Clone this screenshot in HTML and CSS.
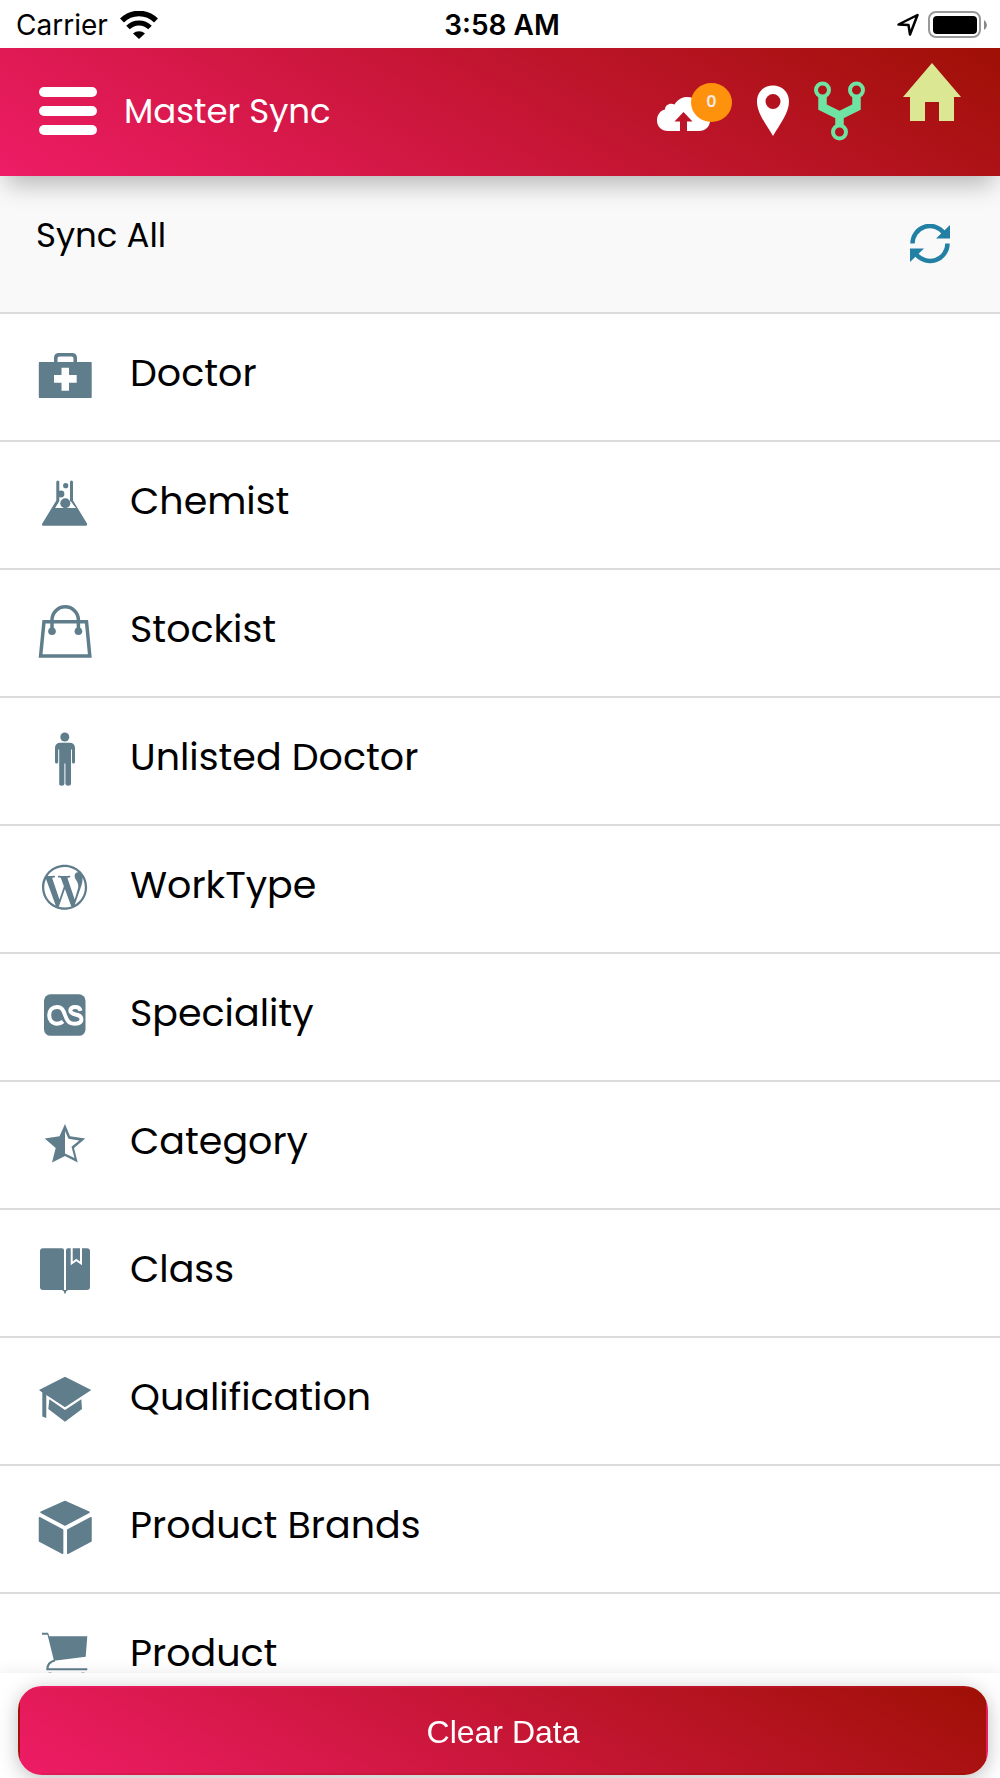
FILE: index.html
```html
<!DOCTYPE html>
<html lang="en">
<head>
<meta charset="utf-8">
<meta name="viewport" content="width=device-width, initial-scale=1">
<title>Master Sync</title>
<link rel="stylesheet" href="styles.css">
</head>
<body>
<div class="status">
  <div class="status-side">
    <span>Carrier</span>
    <svg width="38" height="28" viewBox="0 0 38 28" fill="none" stroke="#000" aria-hidden="true">
      <path d="M2 9.500a24 24 0 0 1 34 0" stroke-width="5.500"/>
      <path d="M8 16.500a15.500 15.500 0 0 1 22 0" stroke-width="5"/>
      <path d="M13 22.500a9 9 0 0 1 12 0L19 28z" fill="#000" stroke="none"/>
    </svg>
  </div>
  <time class="clock">3:58 AM</time>
  <div class="status-side status-end">
    <svg width="24" height="24" viewBox="0 0 24 24" fill="none" stroke="#000" stroke-width="2.500" stroke-linejoin="round" aria-hidden="true"><path d="M2.500 11.500 21.500 2 14 21.500 12.500 12z"/></svg>
    <svg width="60" height="28" viewBox="0 0 60 28" aria-hidden="true">
      <rect x="1" y="1" width="51" height="25" rx="7" fill="#fff" stroke="#999" stroke-width="2"/>
      <rect x="5" y="5" width="44" height="18" rx="4"/>
      <path d="M56 9q3 2 3 5t-3 5z" fill="#888"/>
    </svg>
  </div>
</div>

<header class="bar">
  <button class="plain" type="button" aria-label="Menu">
    <svg width="58" height="50" viewBox="0 0 58 50" fill="#fff" aria-hidden="true"><rect y="1" width="58" height="10" rx="5"/><rect y="20" width="58" height="10" rx="5"/><rect y="39" width="58" height="10" rx="5"/></svg>
  </button>
  <h1 class="title">Master Sync</h1>
  <nav class="actions">
    <button class="plain upload" type="button" aria-label="Pending uploads">
      <svg width="75" height="56" viewBox="0 0 75 56" aria-hidden="true"><path fill="#fff" d="M23 48H11C4.500 48 0 43.500 0 37.500 0 31.500 3.500 27.500 8 26.500 8 22 13 19.500 17.500 21.500 20.500 16.500 25 14 30 14c9 0 14.500 6 14.500 14C50 29 53 33 53 37.500 53 43.500 48.500 48 42 48H30V38.500h5.500L26.500 29 17.500 38.500H23z"/></svg>
      <span class="badge">0</span>
    </button>
    <button class="plain" type="button" aria-label="Location">
      <svg width="32" height="52" viewBox="0 0 32 52" aria-hidden="true"><path fill="#fff" fill-rule="evenodd" d="M16 .5C7 .5 0 7 0 16.500 0 28 9 39 16 51 23 39 32 28 32 16.500 32 7 25 .5 16 .5zM16 9a7.500 7.500 0 1 1 0 15 7.500 7.500 0 0 1 0-15z"/></svg>
    </button>
    <button class="plain" type="button" aria-label="Branches">
      <svg width="51" height="60" viewBox="0 0 51 60" fill="none" stroke="#6fe3a1" aria-hidden="true"><g stroke-width="4"><circle cx="8.500" cy="9" r="6.500"/><circle cx="42.500" cy="9" r="6.500"/><circle cx="25.500" cy="51" r="6.500"/></g><path stroke-width="8.500" d="M8.500 15v11l17 8.500 17-8.500V15M25.500 32v13"/></svg>
    </button>
    <a class="home" href="#" aria-label="Home">
      <svg width="58" height="58" viewBox="0 0 58 58" aria-hidden="true"><path fill="#dbe792" d="M29 0 58 34h-7v24H36V39H22v19H7V34H0z"/></svg>
    </a>
  </nav>
</header>

<section class="sync-all">
  <h2 class="sync-label">Sync All</h2>
  <button class="plain" type="button" aria-label="Sync all">
    <svg width="40" height="40" viewBox="0 0 40 40" aria-hidden="true"><g fill="none" stroke="#2380a5" stroke-width="4.500"><path d="M2.500 19.500A17.500 17.500 0 0 1 34 9"/><path d="M37.500 19.500A17.500 17.500 0 0 1 6 30"/></g><path fill="#2380a5" d="M40 1v13.500H26zM0 38V24.500H14z"/></svg>
  </button>
</section>

<main class="scroll">
<ul class="list">
  <li><button class="item" type="button">
    <svg class="icon" viewBox="0 0 54 54" aria-hidden="true"><path fill-rule="evenodd" d="M1.500 14H16V10q0-5 5-5h13q5 0 5 5v4h14q.7 0 .7.7v34.600q0 .7-.7.7H1.500q-.7 0-.7-.7V14.700q0-.7.7-.7zM19.500 14h16v-3.500q0-2-2-2h-12q-2 0-2 2zM23.500 19.700V27H16v7.700h7.500v8H31v-8h7.700V27H31v-7.300z"/></svg>
    <span>Doctor</span></button></li>
  <li><button class="item" type="button">
    <svg class="icon" viewBox="0 0 54 54" aria-hidden="true"><path d="M18.300 6q0-1.500 1.500-1.500T21.300 6v19.500L17.300 32H38L32 25.500V6q0-1.500 1.500-1.500T35 6v18.500L49 47.500q.7 2.200-1.500 2.200h-42Q3.300 49.700 4.300 47.500L18.300 24.500z"/><path fill="#fff" d="M21.300 25.500 17.300 32H37.500l-4.500-6.500z"/><circle cx="27.700" cy="9.700" r="2.600"/><circle cx="23" cy="18" r="3.400"/><circle cx="27.300" cy="27.300" r="5"/></svg>
    <span>Chemist</span></button></li>
  <li><button class="item" type="button">
    <svg class="icon" viewBox="0 0 54 54" aria-hidden="true"><path fill="none" stroke="#607d8b" stroke-width="3.500" d="M6 17.700h42.500l3.300 34.200H2.600zM14 27V16a13.200 13.200 0 0 1 26.400 0v11"/><circle cx="14" cy="27.300" r="3.800"/><circle cx="40.400" cy="27.300" r="3.800"/></svg>
    <span>Stockist</span></button></li>
  <li><button class="item" type="button">
    <svg class="icon" viewBox="0 0 54 54" aria-hidden="true"><circle cx="26.800" cy="5" r="4.500"/><path d="M22.500 10.700h9q5.500 0 5.500 5.500V30q0 1.500-1.500 1.500T34 30V17.500h-1V52q0 1.700-2.700 1.700T27.400 52V31.500h-1V52q0 1.700-2.700 1.700T21.200 52V17.500h-1V30q0 1.500-1.600 1.500T17 30V16.200q0-5.500 5.500-5.500z"/></svg>
    <span>Unlisted Doctor</span></button></li>
  <li><button class="item" type="button">
    <svg class="icon" viewBox="0 0 54 54" aria-hidden="true"><path fill-rule="evenodd" transform="translate(4 4.700) scale(1.880)" d="M21.469 6.825c.84 1.537 1.318 3.300 1.318 5.175 0 3.979-2.156 7.456-5.363 9.325l3.295-9.527c.615-1.540.820-2.771.820-3.864 0-.405-.026-.780-.070-1.109m-7.981.105c.647-.030 1.232-.105 1.232-.105.582-.075.514-.930-.067-.899 0 0-1.755.135-2.880.135-1.064 0-2.850-.150-2.850-.150-.585-.030-.661.855-.075.885 0 0 .540.061 1.125.090l1.680 4.605-2.370 7.080L5.354 6.900c.649-.030 1.234-.100 1.234-.100.585-.075.516-.930-.065-.896 0 0-1.746.138-2.874.138-.200 0-.438-.008-.690-.015C4.911 3.150 8.235 1.215 12 1.215c2.809 0 5.365 1.072 7.286 2.833-.046-.003-.091-.009-.141-.009-1.060 0-1.812.923-1.812 1.914 0 .890.513 1.643 1.060 2.531.411.720.890 1.643.890 2.977 0 .915-.354 1.994-.821 3.479l-1.075 3.585-3.900-11.610zM12 22.784c-1.059 0-2.081-.153-3.048-.437l3.237-9.406 3.315 9.087c.024.053.050.101.078.149-1.120.393-2.325.609-3.582.609M1.211 12c0-1.564.336-3.050.935-4.390L7.290 21.709C3.694 19.960 1.212 16.271 1.211 12M12 0C5.385 0 0 5.385 0 12s5.385 12 12 12 12-5.385 12-12S18.615 0 12 0"/></svg>
    <span>WorkType</span></button></li>
  <li><button class="item" type="button">
    <svg class="icon" viewBox="0 0 54 54" aria-hidden="true"><rect x="6" y="6.300" width="41.500" height="41.500" rx="6.500"/><path fill="none" stroke="#fff" stroke-width="4" d="M25 33.500C23 35.300 21 35.700 19 35.700 14 35.700 11.200 32 11.200 27.300 11.200 22.200 14.500 19 19 19c5 0 6.500 3.200 8 8 2 6 4 8.700 10 8.700 4 0 6.500-1.700 6.500-4.600C43.500 28 41 27.300 37.500 26.500 34 25.700 32.300 24.800 32.300 22.600 32.300 20.400 34.300 19 37 19c3 0 5 1.200 5.500 3.800"/></svg>
    <span>Speciality</span></button></li>
  <li><button class="item" type="button">
    <svg class="icon" viewBox="0 0 54 54" aria-hidden="true"><path fill-rule="evenodd" d="M27 8 32 20.300 47.300 22.500 36 32l3.700 14.500L27 40 14 46.500 17.700 32 6.700 22.500 21.500 20.300zM27 15v22.500l9.500 4.500-3-11.200 7.800-6.300-10.800-1.700z"/></svg>
    <span>Category</span></button></li>
  <li><button class="item" type="button">
    <svg class="icon" viewBox="0 0 54 54" aria-hidden="true"><path d="M5 4.300h19q2 0 2 2V46H5q-3 0-3-3V7.300q0-3 3-3zM30 4.300h2.700v17l5.600-4 5.700 4v-17h5q3 0 3 3V43q0 3-3 3H28V6.300q0-2 2-2zM34.700 4.300H42v13.200l-3.700-2.700-3.600 2.700zM24 46h6l-2 1.500-.3 2h-1.400l-.3-2z"/></svg>
    <span>Class</span></button></li>
  <li><button class="item" type="button">
    <svg class="icon" viewBox="0 0 54 54" aria-hidden="true"><path d="M27 4.700 53.300 18 27 35.300 8.300 23v23L4.300 44.500V20.500L1 18zM11.300 27.300 27 38l16.300-10.700.7 9.700-17 12.700L10.300 37z"/></svg>
    <span>Qualification</span></button></li>
  <li><button class="item" type="button">
    <svg class="icon" viewBox="0 0 54 54" stroke="#607d8b" stroke-width="1.500" stroke-linejoin="round" aria-hidden="true"><path d="M27 1.500 51 12.300 27 25 3 12.300zM1.500 17.700 24.600 30v23.300L1.500 41zM53 17.700 29.800 30v23.300L53 41z"/></svg>
    <span>Product Brands</span></button></li>
  <li><button class="item" type="button">
    <svg class="icon" viewBox="0 0 54 54" aria-hidden="true"><path d="M4 4.700h6l1.300 3.600h38l-1.600 20.400L16 32.700 9.500 6.700H4z"/><path fill="none" stroke="#607d8b" stroke-width="2" d="M17 32.500Q9.500 34 9.300 41.300H49.300"/><circle cx="12" cy="48" r="3.500"/><circle cx="45" cy="48" r="3.500"/></svg>
    <span>Product</span></button></li>
</ul>
</main>

<footer class="footer">
  <button class="clear" type="button">Clear Data</button>
</footer>
</body>
</html>
```
FILE: styles.css
```css
* { box-sizing: border-box; }

body {
  margin: 0;
  height: 100vh;
  display: flex;
  flex-direction: column;
  overflow: hidden;
  background: #fff;
  color: #000;
  font-family: Poppins, Inter, "Noto Sans", sans-serif;
}

svg { display: block; flex: none; }

button { font: inherit; color: inherit; cursor: pointer; }

.plain {
  display: block;
  padding: 0;
  border: 0;
  background: none;
}

.status {
  flex: none;
  display: flex;
  align-items: center;
  height: 48px;
  padding: 2px 12px 0 16px;
  font: 28px/46px Inter, sans-serif;
}

.status-side {
  flex: 1;
  display: flex;
  align-items: center;
  gap: 12px;
}

.status-end { justify-content: flex-end; gap: 8px; }

.clock { font-weight: 600; }

.bar {
  flex: none;
  position: relative;
  z-index: 1;
  display: flex;
  align-items: center;
  gap: 27px;
  height: 128px;
  padding: 0 39px 2px;
  background: linear-gradient(30deg, #ee1c66, #9f1005);
  box-shadow: 0 14px 24px -6px rgba(0, 0, 0, .28);
  color: #fff;
}

.title {
  flex: 1;
  margin: 0;
  font-size: 34px;
  font-weight: 400;
  line-height: 40px;
}

.actions {
  display: flex;
  align-items: center;
  align-self: stretch;
  gap: 25px;
}

.upload { position: relative; }

.badge {
  position: absolute;
  top: 0;
  right: 0;
  width: 41px;
  height: 39px;
  border-radius: 50%;
  background: #ff920d;
  color: #f3e9e0;
  font-size: 16px;
  font-weight: 600;
  line-height: 37px;
  text-align: center;
}

.home {
  align-self: flex-start;
  margin: 15px 0 0 13px;
}

.sync-all {
  flex: none;
  display: flex;
  align-items: center;
  justify-content: space-between;
  height: 138px;
  padding: 0 50px 0 36px;
  border-bottom: 2px solid #dbdbdb;
  background: #f9f9f9;
}

.sync-label {
  align-self: flex-start;
  margin: 39px 0 0;
  font-size: 34px;
  font-weight: 400;
  line-height: 40px;
}

.scroll {
  flex: 1;
  min-height: 0;
  overflow-y: auto;
  scrollbar-width: none;
}

.list {
  margin: 0;
  padding: 0;
  list-style: none;
}

.item {
  display: flex;
  align-items: flex-start;
  gap: 38px;
  width: 100%;
  height: 128px;
  padding: 34px 38px 0;
  border: 0;
  border-bottom: 2px solid #dbdbdb;
  background: #fff;
  font-size: 38px;
  line-height: 50px;
  text-align: left;
}

.icon {
  width: 54px;
  height: 54px;
  fill: #607d8b;
}

.footer {
  flex: none;
  position: relative;
  padding: 13px 12px 3px 18px;
  background: #fff;
  box-shadow: 0 -2px 14px rgba(0, 0, 0, .07);
}

.clear {
  display: block;
  width: 100%;
  height: 89px;
  padding: 4px 0 0;
  border: 2px solid transparent;
  border-radius: 24px;
  background: linear-gradient(30deg, #ee1c66, #9f1005);
  box-shadow: 0 4px 20px rgba(0, 0, 0, .25);
  color: #fff;
  font: 32px "Liberation Sans", Arial, sans-serif;
}
```
